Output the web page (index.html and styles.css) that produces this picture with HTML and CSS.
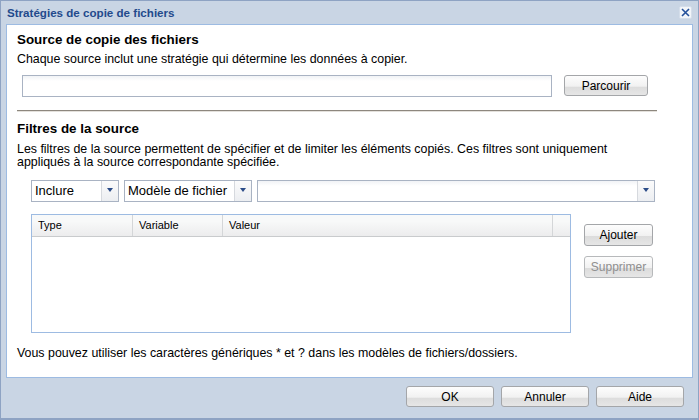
FILE: index.html
```html
<!DOCTYPE html>
<html lang="fr">
  <head>
    <meta charset="UTF-8" />
    <title>Stratégies de copie de fichiers</title>
    <link rel="stylesheet" href="styles.css">
  </head>
  <body>
    <div class="dialog">
      <div class="titlebar">
        <span class="title">Stratégies de copie de fichiers</span>
        <button class="close-btn" title="Fermer">
          <svg width="9" height="9" viewBox="0 0 9 9">
            <path d="M1 1 L8 8 M8 1 L1 8" stroke="#24509a" stroke-width="1.6" fill="none" />
          </svg>
        </button>
      </div>

      <div class="panel">
        <h2 class="section-title first">Source de copie des fichiers</h2>
        <p class="desc">Chaque source inclut une stratégie qui détermine les données à copier.</p>
        <div class="source-row">
          <input type="text" class="text-field source-field" />
          <button class="btn browse-btn">Parcourir</button>
        </div>

        <div class="separator"></div>

        <h2 class="section-title">Filtres de la source</h2>
        <p class="desc filters-desc">Les filtres de la source permettent de spécifier et de limiter les éléments copiés. Ces filtres sont uniquement appliqués à la source correspondante spécifiée.</p>

        <div class="filter-row">
          <div class="combo combo-mode">
            <span class="combo-value">Inclure</span>
            <span class="combo-arrow"></span>
          </div>
          <div class="combo combo-kind">
            <span class="combo-value">Modèle de fichier</span>
            <span class="combo-arrow"></span>
          </div>
          <div class="combo combo-pattern">
            <span class="combo-value"></span>
            <span class="combo-arrow"></span>
          </div>
        </div>

        <div class="table-row">
          <div class="grid">
            <div class="grid-head">
              <div class="col col-type">Type</div>
              <div class="col col-var">Variable</div>
              <div class="col col-val">Valeur</div>
              <div class="col col-end"></div>
            </div>
            <div class="grid-body"></div>
          </div>
          <div class="side-buttons">
            <button class="btn side-btn">Ajouter</button>
            <button class="btn side-btn" disabled>Supprimer</button>
          </div>
        </div>

        <p class="hint">Vous pouvez utiliser les caractères génériques * et ? dans les modèles de fichiers/dossiers.</p>
      </div>

      <div class="footer">
        <button class="btn footer-btn">OK</button>
        <button class="btn footer-btn">Annuler</button>
        <button class="btn footer-btn">Aide</button>
      </div>
    </div>
  </body>
</html>
```

FILE: styles.css
```css
:root {
  --frame-bg: #c9d5e4;
  --frame-border: #8ea3c3;
  --title-color: #234a8c;
  --panel-border: #9dbbe2;
  --field-border: #a9b3c3;
  --text-color: #000;
}

* {
  box-sizing: border-box;
}

body {
  margin: 0;
  font-family: "Liberation Sans", Arial, sans-serif;
  font-size: 12.4px;
  color: var(--text-color);
  background: #fff;
}

.dialog {
  width: 699px;
  height: 420px;
  background-color: var(--frame-bg);
  border: 1px solid var(--frame-border);
  border-bottom-width: 2px;
  display: flex;
  flex-direction: column;
}

.titlebar {
  height: 23px;
  display: flex;
  align-items: center;
  justify-content: space-between;
  padding: 0 6px 0 6px;
}

.title {
  font-weight: bold;
  font-size: 11.6px;
  color: var(--title-color);
}

.close-btn {
  width: 13px;
  height: 13px;
  padding: 0;
  border: 1px solid #d5deea;
  border-radius: 2px;
  background: #f2f5f9;
  display: flex;
  align-items: center;
  justify-content: center;
  margin-top: -1px;
}

.panel {
  margin: 0 5px;
  height: 354px;
  background: #fff;
  border: 1px solid var(--panel-border);
  padding: 0 10px;
}

.section-title {
  margin: 9px 0 0;
  font-size: 13.4px;
  font-weight: bold;
  line-height: 16px;
}

.section-title.first {
  margin-top: 7px;
}

.desc {
  margin: 5px 0 0;
  line-height: 13px;
}

.filters-desc {
  max-width: 605px;
  margin-top: 6px;
}

.source-row {
  display: flex;
  align-items: center;
  gap: 12px;
  margin: 9px 0 0 5px;
}

.text-field {
  height: 22px;
  border: 1px solid var(--field-border);
  background: linear-gradient(#f1f3f6, #fff 5px);
  font: inherit;
  outline: none;
}

.source-field {
  width: 530px;
}

.btn {
  font: inherit;
  font-size: 12px;
  color: #000;
  border: 1px solid #a4a6a9;
  border-radius: 3px;
  background: linear-gradient(#fdfdfd, #f1f1f1 55%, #dcdcdc 56%, #e6e6e6);
  padding: 0;
  height: 21px;
  cursor: pointer;
}

.btn:disabled {
  color: #8f8f8f;
  border-color: #b7b9bb;
  cursor: default;
}

.browse-btn {
  width: 84px;
  margin-top: -1px;
}

.separator {
  width: 640px;
  margin-top: 13px;
  border-top: 1px solid #8d877e;
  border-bottom: 1px solid #e4e1dc;
}

.filter-row {
  display: flex;
  gap: 5px;
  margin: 11px 0 0 14px;
}

.combo {
  height: 22px;
  border: 1px solid var(--field-border);
  background: #fff;
  display: flex;
}

.combo-value {
  flex: 1;
  padding: 0 3px;
  font-size: 13px;
  line-height: 20px;
  white-space: nowrap;
  overflow: hidden;
}

.combo-pattern .combo-value {
  background: linear-gradient(#f1f3f6, #fff 5px);
}

.combo-arrow {
  width: 17px;
  border-left: 1px solid #d6d9de;
  background: linear-gradient(#fbfbfb, #eceef1);
  position: relative;
}

.combo-arrow::after {
  content: "";
  position: absolute;
  left: 5px;
  top: 7px;
  width: 0;
  height: 0;
  border-left: 3.5px solid transparent;
  border-right: 3.5px solid transparent;
  border-top: 4px solid #2b4c88;
}

.combo-mode {
  width: 88px;
}

.combo-kind {
  width: 128px;
}

.combo-pattern {
  width: 398px;
}

.table-row {
  display: flex;
  gap: 13px;
  margin: 12px 0 0 14px;
}

.grid {
  width: 540px;
  height: 119px;
  border: 1px solid var(--panel-border);
  display: flex;
  flex-direction: column;
}

.grid-head {
  height: 22px;
  display: flex;
  background: linear-gradient(#f8f9f9 30%, #ececed);
  border-bottom: 1px solid #c9cbcd;
  font-size: 11px;
  line-height: 21px;
}

.col {
  padding-left: 6px;
  border-right: 1px solid #d4d6d8;
}

.col-type {
  width: 101px;
}

.col-var {
  width: 90px;
}

.col-val {
  width: 330px;
}

.col-end {
  flex: 1;
  border-right: none;
}

.grid-body {
  flex: 1;
  background: #fff;
}

.side-buttons {
  display: flex;
  flex-direction: column;
  gap: 10px;
  padding-top: 10px;
}

.side-btn {
  width: 69px;
  height: 22px;
}

.hint {
  margin: 13px 0 0;
  line-height: 14px;
}

.footer {
  display: flex;
  justify-content: flex-end;
  gap: 7px;
  padding: 8px 14px 0 0;
}

.footer-btn {
  width: 88px;
}
```
